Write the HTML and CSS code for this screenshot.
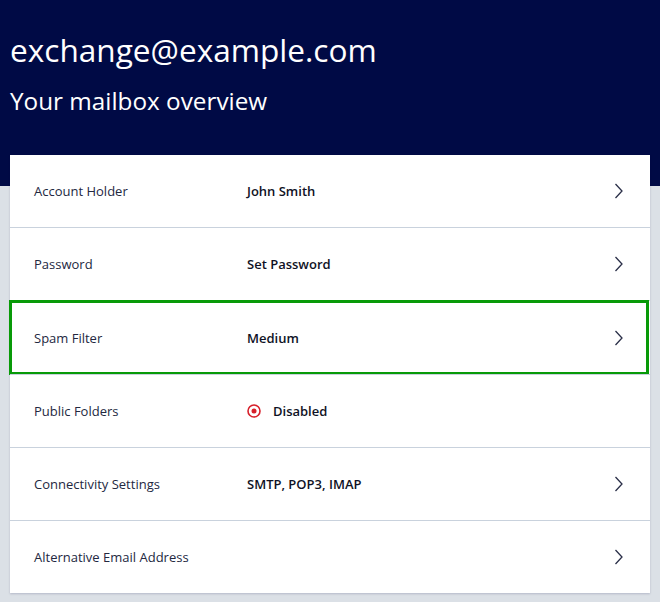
FILE: index.html
```html
<!DOCTYPE html>
<html lang="en">
<head>
<meta charset="utf-8">
<title>Mailbox overview</title>
<link rel="stylesheet" href="styles.css">
</head>
<body>
  <header class="hero">
    <h1 class="hero-title">exchange@example.com</h1>
    <p class="hero-sub">Your mailbox overview</p>
  </header>

  <main class="card">
    <a class="row" href="#">
      <span class="row-label">Account Holder</span>
      <span class="row-value">John Smith</span>
      <svg class="chev" viewBox="0 0 9 16" width="9" height="16"><path d="M1.5 1 L8 8 L1.5 15"/></svg>
    </a>
    <a class="row" href="#">
      <span class="row-label">Password</span>
      <span class="row-value">Set Password</span>
      <svg class="chev" viewBox="0 0 9 16" width="9" height="16"><path d="M1.5 1 L8 8 L1.5 15"/></svg>
    </a>
    <a class="row row-focus" href="#">
      <span class="row-label">Spam Filter</span>
      <span class="row-value">Medium</span>
      <svg class="chev" viewBox="0 0 9 16" width="9" height="16"><path d="M1.5 1 L8 8 L1.5 15"/></svg>
    </a>
    <div class="row">
      <span class="row-label">Public Folders</span>
      <span class="row-value status">
        <svg class="status-icon" viewBox="0 0 14 14" width="14" height="14"><circle cx="7" cy="7" r="6" fill="none" stroke="#d7202b" stroke-width="1.6"/><circle cx="7" cy="7" r="2.5" fill="#d7202b"/></svg>
        Disabled
      </span>
    </div>
    <a class="row" href="#">
      <span class="row-label">Connectivity Settings</span>
      <span class="row-value">SMTP, POP3, IMAP</span>
      <svg class="chev" viewBox="0 0 9 16" width="9" height="16"><path d="M1.5 1 L8 8 L1.5 15"/></svg>
    </a>
    <a class="row" href="#">
      <span class="row-label">Alternative Email Address</span>
      <span class="row-value"></span>
      <svg class="chev" viewBox="0 0 9 16" width="9" height="16"><path d="M1.5 1 L8 8 L1.5 15"/></svg>
    </a>
  </main>
</body>
</html>
```

FILE: styles.css
```css
html, body {
  margin: 0;
  padding: 0;
}

body {
  font-family: "Open Sans", "Noto Sans", sans-serif;
  color: #1b1f3b;
  background: linear-gradient(#000a45 0, #000a45 186px, #dbe0e6 186px);
  min-height: 602px;
}

.hero {
  padding: 28px 10px 0 10px;
  color: #ffffff;
}

.hero-title {
  margin: 0;
  font-size: 31.6px;
  font-weight: 400;
  line-height: 44px;
}

.hero-sub {
  margin: 14px 0 0 0;
  font-size: 24.3px;
  font-weight: 400;
  line-height: 30px;
}

.card {
  margin: 39px 10px 0 10px;
  background: #ffffff;
  box-shadow: 0 1px 2px rgba(0, 10, 69, 0.18);
}

.row {
  position: relative;
  display: grid;
  grid-template-columns: 213px 1fr 9px;
  align-items: center;
  height: 72px;
  padding: 0 27px 0 24px;
  border-top: 1px solid #c9d2dd;
  color: inherit;
  text-decoration: none;
  font-size: 13px;
}

.row:first-child {
  border-top: 0;
}

/* keyboard-focused row: slightly taller, framed in green */
.row-focus {
  height: 73px;
}

.row-focus::after {
  content: "";
  position: absolute;
  top: -1px;
  left: -1px;
  right: 1px;
  bottom: -1px;
  border: 3px solid #089a08;
  pointer-events: none;
}

.row-label {
  font-weight: 400;
  color: #23283f;
}

.row-value {
  font-weight: 600;
  color: #0f1225;
}

.status {
  display: flex;
  align-items: center;
  gap: 12px;
}

.chev {
  display: block;
}

.chev path {
  fill: none;
  stroke: #2a2f48;
  stroke-width: 1.3;
}
```
